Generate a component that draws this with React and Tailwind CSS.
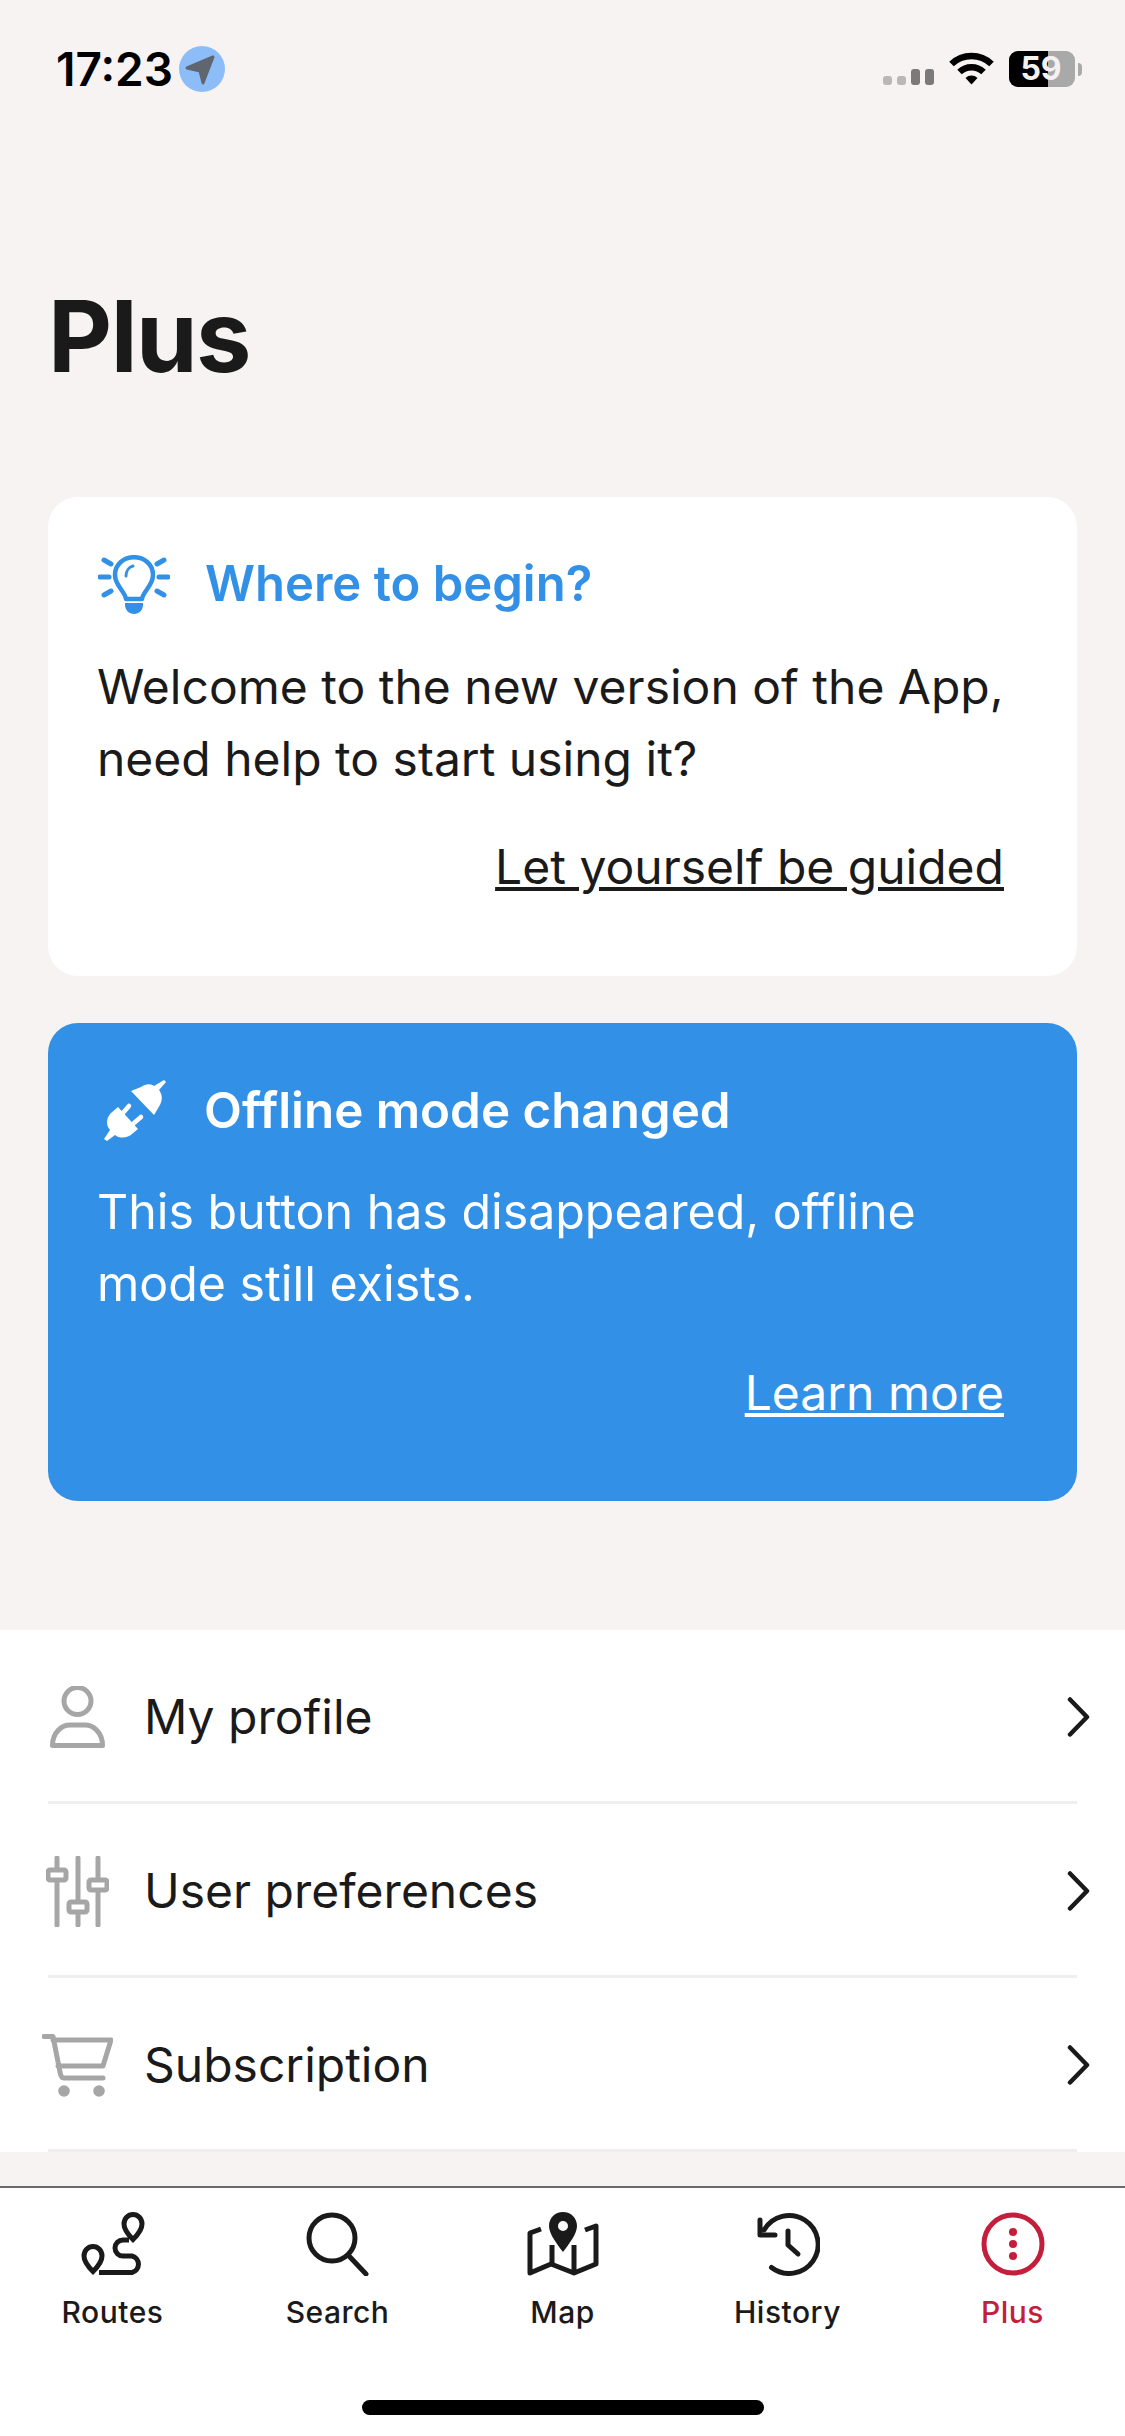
import React from 'react';

const Bulb = () => (
  <svg viewBox="0 0 72 59" className="w-[72px] h-[59px] shrink-0" fill="none" stroke="#3291e6" strokeWidth="4.5" strokeLinecap="round" strokeLinejoin="round">
    <path d="M28 44 C27 36 17 31 17 20 C17 9 26 2.2 36 2.2 C46 2.2 55 9 55 20 C55 31 45 36 44 44 Z" />
    <path d="M28 21 C28 16 31 12 35 11" strokeWidth="3" />
    <path d="M6 5 L13 9 M2 22 H11 M6 40 L13 36 M66 5 L59 9 M70 22 H61 M66 40 L59 36" strokeWidth="5" />
    <path d="M27 48 H45 V50 C45 55 41 59 36 59 C31 59 27 55 27 50 Z" fill="#3291e6" stroke="none" />
  </svg>
);

const Plug = () => (
  <svg viewBox="0 0 62 61" className="w-[62px] h-[61px] shrink-0" fill="#fff">
    <path d="M27 11 L37 7 C42 3 48 4 50 6 L60 0 L62 2 L55 10 C58 14 59 19 56 25 L50 35 Z" />
    <path d="M14 27 L34 49 L28 54 C24 58 16 59 11 55 L3 61 L0 59 L6 50 C1 44 3 37 7 33 Z" />
    <path d="M18 34 L25 26 M30 43 L37 37" stroke="#fff" strokeWidth="4.5" strokeLinecap="round" />
  </svg>
);

const Person = () => (
  <svg viewBox="0 0 55 62" className="w-[55px] h-[62px]" fill="none" stroke="#a6a6a6" strokeWidth="5" strokeLinejoin="round">
    <circle cx="27.5" cy="15" r="13.5" />
    <path d="M2.5 59.5 C2.5 46 12 39 20 39 H35 C43 39 52.5 46 52.5 59.5 Z" />
  </svg>
);

const Sliders = () => (
  <svg viewBox="0 0 63 71" className="w-[63px] h-[71px]" fill="none" stroke="#a6a6a6" strokeWidth="5" strokeLinecap="round" strokeLinejoin="round">
    <path d="M11 2 V13 M11 25 V69 M32 2 V45 M32 57 V69 M52 2 V23 M52 35 V69" />
    <rect x="2" y="14" width="18" height="10" rx="2" />
    <rect x="23" y="46" width="18" height="10" rx="2" />
    <rect x="43" y="24" width="18" height="10" rx="2" />
  </svg>
);

const Cart = () => (
  <svg viewBox="0 0 71 63" className="w-[71px] h-[63px]" fill="none" stroke="#a6a6a6" strokeWidth="5" strokeLinecap="round" strokeLinejoin="round">
    <path d="M2 2.5 H11 L18 38 C18.5 41 19 44 22 44 H61" />
    <path d="M11 6 H69 L61 32 H16" />
    <circle cx="22" cy="57" r="5.8" fill="#a6a6a6" stroke="none" />
    <circle cx="57" cy="57" r="5.8" fill="#a6a6a6" stroke="none" />
  </svg>
);

const Chevron = () => (
  <svg viewBox="0 0 24 42" className="w-[24px] h-[42px] shrink-0" fill="none" stroke="#1b1a1a" strokeWidth="4.5" strokeLinecap="round" strokeLinejoin="round">
    <path d="M4 3.5 L21 21 L4 38.5" />
  </svg>
);

const RoutesIcon = () => (
  <svg viewBox="0 0 64 64" className="w-[64px] h-[64px]" fill="none" stroke="#1b1a1a" strokeWidth="5">
    <path d="M52 2.5 C57 2.5 61 6.5 61 12 C61 17 56.5 23 52 27.5 C47.5 23 43 17 43 12 C43 6.5 47 2.5 52 2.5 Z" />
    <path d="M12 34.5 C17 34.5 21 38.5 21 44 C21 49 16.5 55 12 59.5 C7.5 55 3 49 3 44 C3 38.5 7 34.5 12 34.5 Z" />
    <path d="M48 28 H42 A8 8 0 0 0 42 44 H51 A8.5 8.5 0 0 1 51 60.5 H18" />
  </svg>
);

const SearchIcon = () => (
  <svg viewBox="0 0 64 64" className="w-[64px] h-[64px]" fill="none" stroke="#1b1a1a" strokeWidth="5" strokeLinecap="round">
    <circle cx="26" cy="26" r="23" />
    <path d="M43 44 L60 62" />
  </svg>
);

const MapIcon = () => (
  <svg viewBox="0 0 72 64" className="w-[72px] h-[64px]" fill="none" stroke="#1b1a1a" strokeWidth="5" strokeLinejoin="round">
    <path d="M14 17 L3 21 V61 L24 52 L47 61 L69 52 V14 L58 18" />
    <path d="M25 33 V52 M47 33 V61" />
    <path fillRule="evenodd" d="M36 0 C44 0 50 6 50 14 C50 22 42 32 36 40 C30 32 22 22 22 14 C22 6 28 0 36 0 Z M36 9 A5 5 0 1 0 36 19 A5 5 0 1 0 36 9 Z" fill="#1b1a1a" stroke="none" />
  </svg>
);

const HistoryIcon = () => (
  <svg viewBox="0 0 64 64" className="w-[64px] h-[64px]" fill="none" stroke="#1b1a1a" strokeWidth="5" strokeLinecap="round" strokeLinejoin="round">
    <path d="M8 18 A29 29 0 1 1 15.5 55.5" />
    <path d="M4 8 V23 H19" />
    <path d="M32 19 V33 L42 42" />
  </svg>
);

const PlusIcon = () => (
  <svg viewBox="0 0 64 64" className="w-[64px] h-[64px]" fill="none" stroke="#c41e3d" strokeWidth="5">
    <circle cx="32" cy="32" r="29" />
    <circle cx="32" cy="20" r="4" fill="#c41e3d" stroke="none" />
    <circle cx="32" cy="32" r="4" fill="#c41e3d" stroke="none" />
    <circle cx="32" cy="44" r="4" fill="#c41e3d" stroke="none" />
  </svg>
);

const menu = [
  { label: 'My profile', icon: <Person /> },
  { label: 'User preferences', icon: <Sliders /> },
  { label: 'Subscription', icon: <Cart /> },
];

const tabs = [
  { label: 'Routes', icon: <RoutesIcon /> },
  { label: 'Search', icon: <SearchIcon /> },
  { label: 'Map', icon: <MapIcon /> },
  { label: 'History', icon: <HistoryIcon /> },
  { label: 'Plus', icon: <PlusIcon />, active: true },
];

const StatusBar = () => (
  <div className="h-[140px] pt-[46px] pl-[56px] pr-[43px] flex items-start justify-between shrink-0">
    <div className="flex items-center gap-[6px]">
      <span className="text-[46px] leading-[46px] font-semibold text-black">17:23</span>
      <div className="w-[46px] h-[46px] rounded-full bg-[#8dbdf9] flex items-center justify-center">
        <svg viewBox="0 0 46 46" className="w-[46px] h-[46px]">
          <path d="M34 11 L8 22 L21 25 L24 37 Z" fill="#5f6670" stroke="#5f6670" strokeWidth="3" strokeLinejoin="round" />
        </svg>
      </div>
    </div>
    <div className="flex items-end gap-[15px] h-[41px]">
      <div className="flex items-end gap-[5px] pb-[2px]">
        <div className="w-[9px] h-[9px] rounded-[3px] bg-[#b9b7b7]" />
        <div className="w-[9px] h-[9px] rounded-[3px] bg-[#b9b7b7]" />
        <div className="w-[9px] h-[16px] rounded-[3px] bg-[#7b7979]" />
        <div className="w-[9px] h-[16px] rounded-[3px] bg-[#7b7979]" />
      </div>
      <svg viewBox="0 0 45 34" className="w-[45px] h-[34px] mb-[2px]" fill="none" stroke="#000" strokeWidth="6.5">
        <path d="M2.5 13 A29 29 0 0 1 42.5 13" />
        <path d="M10.5 21 A17.5 17.5 0 0 1 34.5 21" />
        <path d="M16.5 27 L22.5 33.5 L28.5 27 A8.5 8.5 0 0 0 16.5 27 Z" fill="#000" stroke="none" />
      </svg>
      <div className="flex items-center gap-[3px]">
        <div className="relative w-[66px] h-[36px] rounded-[9px] bg-[#a9a9a9] flex">
          <div className="w-[39px] h-full rounded-l-[9px] bg-black" />
          <span className="absolute inset-0 flex items-center justify-center text-[32px] leading-none font-bold text-[#f4f1f0] pr-[2px]">59</span>
        </div>
        <div className="w-[4px] h-[13px] rounded-r-full bg-[#a9a9a9]" />
      </div>
    </div>
  </div>
);

export default function App() {
  return (
    <div className="w-[1125px] h-[2436px] overflow-hidden flex flex-col bg-[#f7f3f2] text-[#1b1a1a] font-['Inter',sans-serif]">
      <StatusBar />

      <h1 className="ml-[48px] mt-[136px] text-[99px] leading-[120px] font-bold tracking-[-1.5px] shrink-0">Plus</h1>

      <div className="mx-[48px] mt-[101px] h-[479px] shrink-0 rounded-[30px] bg-white pt-[55px] pl-[49px] pr-[60px]">
        <div className="flex items-center gap-[35px] h-[64px]">
          <div className="pl-[1px]"><Bulb /></div>
          <h2 className="text-[49px] leading-[64px] font-semibold text-[#3291e6]">Where to begin?</h2>
        </div>
        <p className="mt-[35px] text-[48px] leading-[72px]">Welcome to the new version of the App, need help to start using it?</p>
        <div className="mt-[36px] mr-[13px] text-right text-[48px] leading-[72px] underline">Let yourself be guided</div>
      </div>

      <div className="mx-[48px] mt-[47px] h-[478px] shrink-0 rounded-[30px] bg-[#3291e6] text-white pt-[55px] pl-[49px] pr-[60px]">
        <div className="flex items-center gap-[38px] h-[64px]">
          <div className="pl-[7px]"><Plug /></div>
          <h2 className="text-[49.3px] leading-[64px] font-semibold">Offline mode changed</h2>
        </div>
        <p className="mt-[34px] pr-[13px] text-[48.3px] leading-[72px]">This button has disappeared, offline mode still exists.</p>
        <div className="mt-[37px] mr-[13px] text-right text-[48px] leading-[72px] underline">Learn more</div>
      </div>

      <div className="mt-[129px] bg-white shrink-0">
        {menu.map((item) => (
          <div key={item.label} className="h-[174px] relative flex items-center pl-[42px] pr-[35px]">
            <div className="w-[71px] flex justify-center shrink-0">{item.icon}</div>
            <span className="ml-[31px] flex-1 text-[48px] leading-[64px]">{item.label}</span>
            <Chevron />
            <div className="absolute left-[48px] right-[48px] bottom-0 h-[3px] bg-[#f0efef]" />
          </div>
        ))}
      </div>

      <div className="flex-1" />

      <nav className="h-[250px] shrink-0 bg-white border-t-2 border-[#6a6a6a] relative">
        <div className="grid grid-cols-5 pt-[24px]">
          {tabs.map((tab) => (
            <div key={tab.label} className={`flex flex-col items-center ${tab.active ? 'text-[#c41e3d]' : 'text-[#1b1a1a]'}`}>
              <div className="h-[64px] flex items-center justify-center">{tab.icon}</div>
              <span className="mt-[18px] text-[30px] leading-[36px] font-medium tracking-[0.5px]">{tab.label}</span>
            </div>
          ))}
        </div>
        <div className="absolute left-[362px] bottom-[21px] w-[402px] h-[15px] rounded-full bg-black" />
      </nav>
    </div>
  );
}
